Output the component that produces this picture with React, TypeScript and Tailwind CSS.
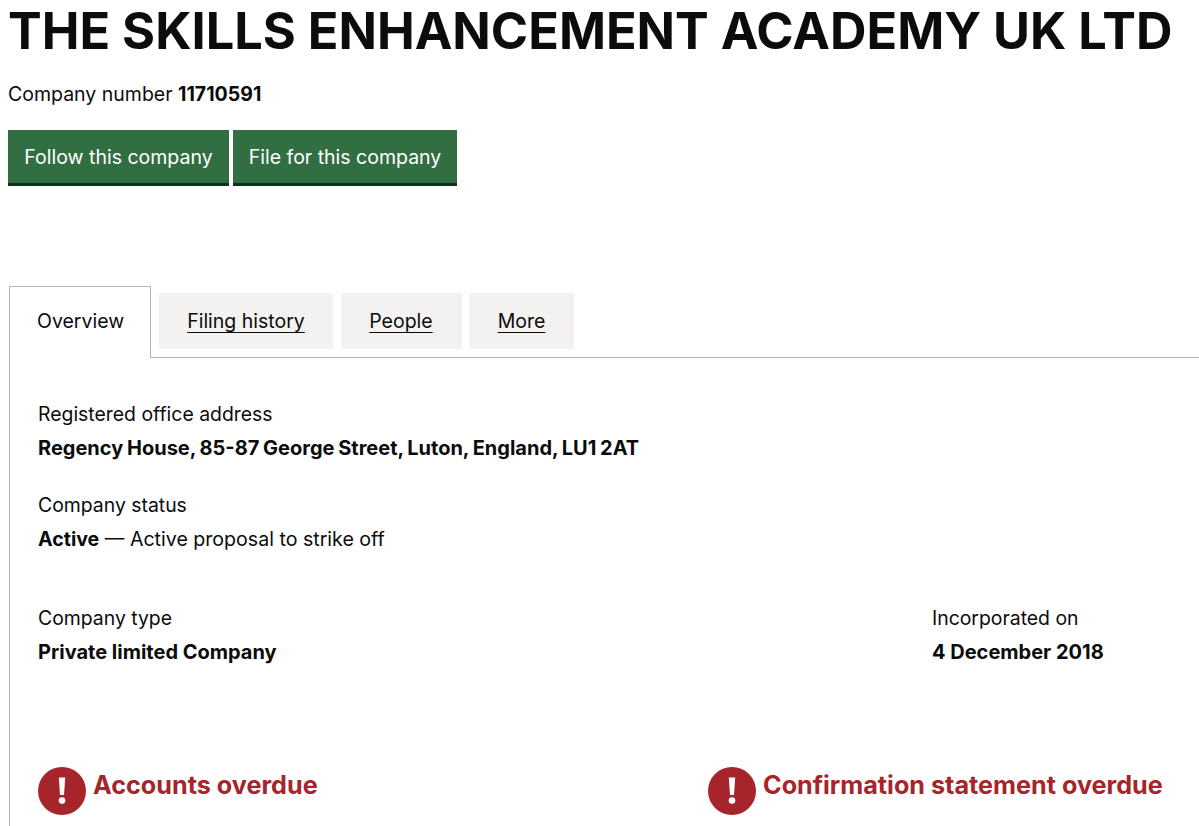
const fontStack = "font-['Inter','Liberation_Sans',sans-serif]";

function Tab({ label, width }: { label: string; width: string }) {
  return (
    <a className={`flex h-[56px] items-center justify-center bg-[#f3f2f1] pt-[2px] text-[19.5px] text-[#0b0c0c] underline underline-offset-[4px] ${width}`}>
      {label}
    </a>
  );
}

function Field({ label, value, tight }: { label: string; value: string; tight?: boolean }) {
  return (
    <div>
      <div className="text-[19.4px] leading-[26px]">{label}</div>
      <div className={`mt-[8px] text-[20px] font-bold leading-[26px] ${tight ? "[word-spacing:-1px]" : ""}`}>{value}</div>
    </div>
  );
}

function Alert({ label }: { label: string }) {
  return (
    <div className="flex items-center gap-[7px]">
      <svg width="48" height="48" viewBox="0 0 48 48" className="shrink-0">
        <circle cx="24" cy="24" r="24" fill="#a6252b" />
        <path d="M20.8 10.5h6.4l-1.2 17.5h-4z" fill="#fff" />
        <circle cx="24" cy="33.6" r="3.3" fill="#fff" />
      </svg>
      <span className="pb-[10px] text-[25.2px] font-bold text-[#a6252b]">{label}</span>
    </div>
  );
}

export default function App() {
  return (
    <div className={`h-[826px] w-[1199px] overflow-hidden bg-white text-[#0b0c0c] ${fontStack}`}>
      <h1 className="pl-[8px] pt-[2px] text-[50.5px] font-bold leading-[58px] whitespace-nowrap">
        THE SKILLS ENHANCEMENT ACADEMY UK LTD
      </h1>
      <p className="pl-[8px] pt-[21px] text-[19.5px] leading-[26px]">
        Company number <strong>11710591</strong>
      </p>
      <div className="flex gap-[4px] pl-[8px] pt-[23px]">
        <button className="h-[56px] w-[221px] border-b-[3px] border-[#0e3018] bg-[#316f43] pt-[2px] text-[19.5px] text-white">
          Follow this company
        </button>
        <button className="h-[56px] w-[224px] border-b-[3px] border-[#0e3018] bg-[#316f43] pt-[2px] text-[19.5px] text-white">
          File for this company
        </button>
      </div>

      <div className="ml-[9px] mt-[99px] flex items-end border-b border-[#b1b4b6]">
        <div className="relative top-px h-[72px] w-[142px] border border-b-0 border-[#b1b4b6] bg-white pl-[27px] pt-[20px] text-[19.5px]">
          Overview
        </div>
        <div className="ml-[8px] flex gap-[7.5px] pb-[8px]">
          <Tab label="Filing history" width="w-[174px]" />
          <Tab label="People" width="w-[121px]" />
          <Tab label="More" width="w-[105px]" />
        </div>
      </div>

      <div className="ml-[9px] h-[470px] border-l border-[#b1b4b6] pl-[28px] pt-[43px]">
        <Field label="Registered office address" value="Regency House, 85-87 George Street, Luton, England, LU1 2AT" tight />
        <div className="mt-[31px]">
          <div className="text-[19.4px] leading-[26px]">Company status</div>
          <div className="mt-[8px] text-[19.6px] leading-[26px]">
            <strong>Active</strong> — Active proposal to strike off
          </div>
        </div>
        <div className="mt-[53px] flex">
          <div className="w-[894px]">
            <Field label="Company type" value="Private limited Company" />
          </div>
          <Field label="Incorporated on" value="4 December 2018" />
        </div>
        <div className="mt-[102px] flex">
          <div className="w-[670px]">
            <Alert label="Accounts overdue" />
          </div>
          <Alert label="Confirmation statement overdue" />
        </div>
      </div>
    </div>
  );
}
